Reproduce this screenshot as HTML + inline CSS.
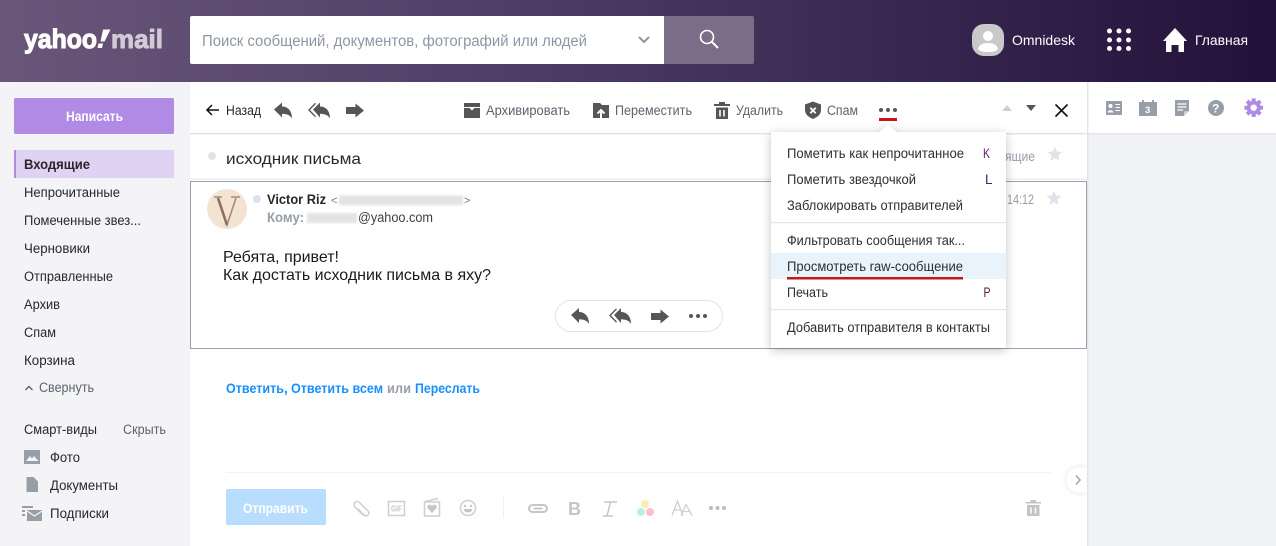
<!DOCTYPE html>
<html lang="ru"><head><meta charset="utf-8"><title>Yahoo Mail</title>
<style>
html,body{margin:0;padding:0;background:#fff;width:1276px;height:546px;overflow:hidden}
svg{display:block}
text{font-family:"Liberation Sans",sans-serif;font-size:13.5px;fill:#26282a}
.g{fill:#5b636e}
.m{font-size:13.5px;fill:#2c2f33}
.b{font-weight:bold}
.i{fill:#55565a}
.r{fill:#979ea8}
.f{fill:#c6c6c8}
.l{font-weight:bold;fill:#188fff}
</style></head><body>
<svg width="1276" height="546" viewBox="0 0 1276 546" xmlns="http://www.w3.org/2000/svg">
<defs>
<linearGradient id="hd" x1="0" y1="0" x2="1276" y2="0" gradientUnits="userSpaceOnUse">
<stop offset="0" stop-color="#6a5679"/><stop offset=".33" stop-color="#54426a"/><stop offset=".67" stop-color="#3b2a52"/><stop offset="1" stop-color="#23113a"/>
</linearGradient>
<filter id="bl" x="-20%" y="-50%" width="140%" height="200%"><feGaussianBlur stdDeviation="1"/></filter>
<filter id="sh" x="-10%" y="-10%" width="120%" height="125%"><feDropShadow dx="0" dy="2" stdDeviation="5" flood-color="#000" flood-opacity=".24"/></filter>
<filter id="sh2" x="-50%" y="-50%" width="200%" height="200%"><feDropShadow dx="0" dy="0" stdDeviation="3" flood-color="#000" flood-opacity=".12"/></filter>
<path id="rp" d="M0 7 8 0V4C13.500 4 18 8 18 16 15.800 12.500 13 11.400 8 11.400V15Z"/>
<g id="ra"><path d="M6.500 .8 0 7.500 6.500 14.200" fill="none" stroke="currentColor" stroke-width="1.400"/><path d="M4 7 11 0V4C16.500 4 21 8 21 16 18.800 12.500 16 11.400 11 11.400V15Z" fill="currentColor"/></g>
<path id="fw" d="M0 3.500H9.500V0L18 7 9.500 14V10.500H0Z"/>
</defs>

<!-- backgrounds -->
<rect width="1276" height="82" fill="url(#hd)"/>
<rect y="82" width="190" height="464" fill="#f4f4f7"/>
<rect x="1087" y="133" width="189" height="413" fill="#f1f2f5"/>
<rect x="190" y="133" width="1086" height="1.500" fill="#e2e4e8"/>
<rect x="1087" y="82" width="1.500" height="464" fill="#e2e4e8"/>

<!-- logo -->
<text x="24" y="48" textLength="73" lengthAdjust="spacingAndGlyphs" style="font-size:27px;font-weight:bold;fill:#fff;stroke:#fff;stroke-width:1.100">yahoo</text>
<path d="M103 29.500H110.500L104.500 41.500H100.500ZM98.500 43.500H103L102 48H97.500Z" fill="#fff"/>
<text x="111" y="48" textLength="52" lengthAdjust="spacingAndGlyphs" style="font-size:26px;font-weight:bold;fill:#d0ccd6;stroke:#d0ccd6;stroke-width:.9">mail</text>

<!-- search -->
<path d="M192 16H664V64H192a2 2 0 0 1-2-2V18a2 2 0 0 1 2-2Z" fill="#fff"/>
<path d="M664 16H752a2 2 0 0 1 2 2V62a2 2 0 0 1-2 2H664Z" fill="#7b6d88"/>
<text x="202" y="46" textLength="385" lengthAdjust="spacingAndGlyphs" style="font-size:15.500px;fill:#8d96a5">Поиск сообщений, документов, фотографий или людей</text>
<path d="M639 37 644 42 649 37" fill="none" stroke="#8d96a5" stroke-width="2"/>
<circle cx="707" cy="37" r="6.500" fill="none" stroke="#fff" stroke-width="1.600"/>
<path d="M711.500 41.500 718 48" stroke="#fff" stroke-width="2"/>

<!-- account -->
<rect x="972" y="24" width="32" height="32" rx="12" fill="#c9c9c9"/>
<circle cx="988" cy="36" r="5" fill="#fff"/>
<path d="M978 49c1-4.500 5-6 10-6s9 1.500 10 6c-2 2.500-5 3-10 3s-8-.5-10-3Z" fill="#fff"/>
<text x="1012" y="45" textLength="63" lengthAdjust="spacingAndGlyphs" style="font-size:14px;fill:#fff">Omnidesk</text>
<g fill="#fff">
<circle cx="1109.500" cy="31" r="2.500"/><circle cx="1119" cy="31" r="2.500"/><circle cx="1128.500" cy="31" r="2.500"/>
<circle cx="1109.500" cy="40" r="2.500"/><circle cx="1119" cy="40" r="2.500"/><circle cx="1128.500" cy="40" r="2.500"/>
<circle cx="1109.500" cy="48.500" r="2.500"/><circle cx="1119" cy="48.500" r="2.500"/><circle cx="1128.500" cy="48.500" r="2.500"/>
<path d="M1163 41 1175 28 1187 41H1184V52H1178.500V45H1171.500V52H1166V41Z"/>
</g>
<text x="1195" y="45" textLength="53" lengthAdjust="spacingAndGlyphs" style="font-size:14px;fill:#fff">Главная</text>

<!-- sidebar -->
<rect x="14" y="98" width="160" height="36" rx="2" fill="#b18ae6"/>
<text x="66" y="121" textLength="57" lengthAdjust="spacingAndGlyphs" class="b" style="fill:#fff">Написать</text>
<rect x="14" y="150" width="160" height="28" fill="#e0d2f3"/>
<rect x="14" y="150" width="2" height="28" fill="#b18ae6"/>
<text x="24" y="169" textLength="66" lengthAdjust="spacingAndGlyphs" class="b">Входящие</text>
<text x="24" y="197" textLength="96" lengthAdjust="spacingAndGlyphs">Непрочитанные</text>
<text x="24" y="225" textLength="117" lengthAdjust="spacingAndGlyphs">Помеченные звез...</text>
<text x="24" y="253" textLength="66" lengthAdjust="spacingAndGlyphs">Черновики</text>
<text x="24" y="281" textLength="89" lengthAdjust="spacingAndGlyphs">Отправленные</text>
<text x="24" y="309" textLength="36" lengthAdjust="spacingAndGlyphs">Архив</text>
<text x="24" y="337" textLength="32" lengthAdjust="spacingAndGlyphs">Спам</text>
<text x="24" y="365" textLength="51" lengthAdjust="spacingAndGlyphs">Корзина</text>
<path d="M25.500 390 29 386.500 32.500 390" fill="none" stroke="#5b636e" stroke-width="1.400"/>
<text x="39" y="392" textLength="55" lengthAdjust="spacingAndGlyphs" class="g">Свернуть</text>
<text x="24" y="434" textLength="73" lengthAdjust="spacingAndGlyphs">Смарт-виды</text>
<text x="123" y="434" textLength="43" lengthAdjust="spacingAndGlyphs" class="g">Скрыть</text>
<rect x="24" y="450" width="16" height="14" class="r"/>
<path d="M26 461 30 456 32 458.500 34 456 38.500 461Z" fill="#f4f4f7"/>
<path d="M26.500 477H33.500L38 481.500V492H26.500Z" class="r"/>
<path d="M22 506H33V508H22ZM22 510H25V512H22ZM22 514H25V516H22Z" class="r"/>
<path d="M27 510H42V521H27Z" class="r"/>
<path d="M27 511 34.500 516 42 511" fill="none" stroke="#f4f4f7" stroke-width="1.200"/>
<text x="50" y="462" textLength="30" lengthAdjust="spacingAndGlyphs">Фото</text>
<text x="50" y="490" textLength="68" lengthAdjust="spacingAndGlyphs">Документы</text>
<text x="50" y="518" textLength="59" lengthAdjust="spacingAndGlyphs">Подписки</text>

<!-- toolbar -->
<path d="M219 110H207M212 105 207 110 212 115" fill="none" stroke="#111" stroke-width="1.500"/>
<text x="226" y="115" textLength="35" lengthAdjust="spacingAndGlyphs">Назад</text>
<use href="#rp" x="274" y="102.500" class="i"/>
<use href="#ra" x="309" y="102.500" style="color:#55565a"/>
<use href="#fw" x="346" y="103.500" class="i"/>

<path d="M464 103H480V107H464ZM464 108H469.500L472 110.500 474.500 108H480V118H464Z" class="i"/>
<text x="486" y="115" textLength="84" lengthAdjust="spacingAndGlyphs" class="g">Архивировать</text>
<path d="M593 103H600L602 105H609V118H593Z" class="i"/>
<path d="M601 118V111.500M597.500 113.500 601 110 604.500 113.500" fill="none" stroke="#fff" stroke-width="2"/>
<text x="615" y="115" textLength="77" lengthAdjust="spacingAndGlyphs" class="g">Переместить</text>
<path d="M714 104H719V102H725V104H730V106H714ZM716 107.500H728V119H716Z" class="i"/>
<path d="M720 110V116.500M724 110V116.500" stroke="#fff" stroke-width="1.600"/>
<text x="736" y="115" textLength="47" lengthAdjust="spacingAndGlyphs" class="g">Удалить</text>
<path d="M813 101.500 821 104.500V110C821 114.500 817.500 117 813 119 808.500 117 805 114.500 805 110V104.500Z" class="i"/>
<path d="M810.300 107.800 815.700 113.200M815.700 107.800 810.300 113.200" stroke="#fff" stroke-width="1.800"/>
<text x="827" y="115" textLength="31" lengthAdjust="spacingAndGlyphs" class="g">Спам</text>
<circle cx="881" cy="110" r="2" class="i"/><circle cx="888" cy="110" r="2" class="i"/><circle cx="895" cy="110" r="2" class="i"/>
<rect x="879" y="118" width="18" height="3" fill="#c91616"/>
<path d="M1002 111 1007 105 1012 111Z" fill="#cfcfd1"/>
<path d="M1026 105H1036L1031 111Z" fill="#55565a"/>
<path d="M1055.500 104.500 1067.500 116.500M1067.500 104.500 1055.500 116.500" stroke="#111" stroke-width="1.600"/>

<!-- right rail -->
<rect x="1106" y="101" width="16" height="14" rx="1" class="r"/>
<circle cx="1110.500" cy="106" r="2" fill="#fff"/><path d="M1107.500 112.500c.3-3 5.700-3 6 0Z" fill="#fff"/>
<path d="M1115.500 104.500H1120M1115.500 107.500H1120M1115.500 110.500H1120" stroke="#fff" stroke-width="1"/>
<path d="M1139 102H1142V100H1144V102H1152V100H1154V102H1157V116H1139Z" class="r"/>
<text x="1145" y="113" style="font-size:9.500px;font-weight:bold;fill:#fff">3</text>
<path d="M1175 100H1189V111L1184 116H1175Z" class="r"/>
<path d="M1177.500 104H1186.500M1177.500 107H1186.500M1177.500 110H1183" stroke="#fff" stroke-width="1.200"/>
<path d="M1185 116V112H1189" fill="none" stroke="#fff" stroke-width="1"/>
<circle cx="1216" cy="108" r="8" class="r"/>
<text x="1212" y="112.500" style="font-size:12px;font-weight:bold;fill:#fff">?</text>
<circle cx="1253.700" cy="107.700" r="7" fill="#b18ae6"/>
<g stroke="#b18ae6" stroke-width="4"><path d="M1253.700 98.400V117M1244.400 107.700H1263M1247.100 101.100 1260.300 114.300M1260.300 101.100 1247.100 114.300"/></g>
<circle cx="1253.700" cy="107.700" r="3.200" fill="#fff"/>

<!-- subject -->
<circle cx="212" cy="156" r="4" fill="#e0e4ea"/>
<text x="226" y="164" textLength="135" lengthAdjust="spacingAndGlyphs" style="font-size:16px">исходник письма</text>
<text x="1005" y="161" textLength="30" lengthAdjust="spacingAndGlyphs" style="fill:#979ea8">ящие</text>
<path d="M1055 146.500 1057 151.500 1062.500 152 1058.300 155.500 1059.600 161 1055 158 1050.400 161 1051.700 155.500 1047.500 152 1053 151.500Z" fill="#e0e4ea"/>

<!-- message card -->
<rect x="190.500" y="181.500" width="896" height="167" fill="#fff" stroke="#9b9fb2"/>
<rect x="190" y="178.500" width="897" height="1.500" fill="#eceef1"/>
<circle cx="227" cy="209" r="20" fill="#f3e3d2"/>
<path d="M214 197H222M231 197H240M218 198 227 225 236 198" fill="none" stroke="#a98a78" stroke-width="1.600"/>
<path d="M218 198 227 225" stroke="#8f6f62" stroke-width="2.600"/>
<circle cx="257" cy="199" r="4" fill="#dde0ee"/>
<text x="267" y="204" textLength="59" lengthAdjust="spacingAndGlyphs" class="b">Victor Riz</text>
<text x="331" y="204" style="font-size:11px;fill:#6e7580">&lt;</text>
<rect x="339" y="195.500" width="124" height="9.500" fill="#e2e3e5" filter="url(#bl)"/>
<text x="464" y="204" style="font-size:11px;fill:#6e7580">&gt;</text>
<text x="267" y="222" textLength="37" lengthAdjust="spacingAndGlyphs" class="b" style="fill:#979ea8">Кому:</text>
<rect x="307" y="213" width="50" height="10" fill="#e2e3e5" filter="url(#bl)"/>
<text x="358" y="222" textLength="75" lengthAdjust="spacingAndGlyphs" style="fill:#3b3f45">@yahoo.com</text>
<text x="223" y="262" textLength="116" lengthAdjust="spacingAndGlyphs" style="font-size:16px;fill:#1a1a1a">Ребята, привет!</text>
<text x="223" y="280" textLength="268" lengthAdjust="spacingAndGlyphs" style="font-size:16px;fill:#1a1a1a">Как достать исходник письма в яху?</text>
<text x="1007" y="204" textLength="27" lengthAdjust="spacingAndGlyphs" style="font-size:14px;fill:#979ea8">14:12</text>
<path d="M1054 190.500 1056 195.500 1061.500 196 1057.300 199.500 1058.600 205 1054 202 1049.400 205 1050.700 199.500 1046.500 196 1052 195.500Z" fill="#e0e4ea"/>

<!-- pill -->
<rect x="555.500" y="300.500" width="167" height="31" rx="15.500" fill="#fff" stroke="#e0e4ea"/>
<use href="#rp" x="571" y="308" class="i"/>
<use href="#ra" x="610" y="308" style="color:#55565a"/>
<use href="#fw" x="651" y="309.500" class="i"/>
<circle cx="691" cy="316" r="2" class="i"/><circle cx="698" cy="316" r="2" class="i"/><circle cx="705" cy="316" r="2" class="i"/>

<!-- menu -->
<g filter="url(#sh)">
<path d="M773 132H880L888 124.500 896 132H1004a2 2 0 0 1 2 2V346a2 2 0 0 1-2 2H773a2 2 0 0 1-2-2V134a2 2 0 0 1 2-2Z" fill="#fff"/>
</g>
<rect x="771" y="253" width="235" height="26" fill="#e9f3fc"/>
<rect x="771" y="222" width="235" height="1.200" fill="#e2e4e8"/>
<rect x="771" y="309" width="235" height="1.200" fill="#e2e4e8"/>
<text x="787" y="158" textLength="177" lengthAdjust="spacingAndGlyphs" class="m">Пометить как непрочитанное</text>
<text x="983" y="158" textLength="7" lengthAdjust="spacingAndGlyphs" style="fill:#5a1a70">K</text>
<text x="787" y="184" textLength="129" lengthAdjust="spacingAndGlyphs" class="m">Пометить звездочкой</text>
<text x="985" y="184" style="fill:#3a2a70">L</text>
<text x="787" y="210" textLength="176" lengthAdjust="spacingAndGlyphs" class="m">Заблокировать отправителей</text>
<text x="787" y="245" textLength="178" lengthAdjust="spacingAndGlyphs" class="m">Фильтровать сообщения так...</text>
<text x="787" y="271" textLength="176" lengthAdjust="spacingAndGlyphs" class="m">Просмотреть raw-сообщение</text>
<rect x="787" y="277" width="176" height="2.500" fill="#c91616"/>
<text x="787" y="297" textLength="41" lengthAdjust="spacingAndGlyphs" class="m">Печать</text>
<text x="983.500" y="297" textLength="7" lengthAdjust="spacingAndGlyphs" style="fill:#5a1a30">P</text>
<text x="787" y="332" textLength="203" lengthAdjust="spacingAndGlyphs" class="m">Добавить отправителя в контакты</text>

<!-- reply links -->
<text x="226" y="393" textLength="58" lengthAdjust="spacingAndGlyphs" class="l">Ответить</text>
<text x="284" y="393" class="l">,</text>
<text x="291" y="393" textLength="92" lengthAdjust="spacingAndGlyphs" class="l">Ответить всем</text>
<text x="387" y="393" textLength="24" lengthAdjust="spacingAndGlyphs" class="b" style="fill:#979ea8">или</text>
<text x="415" y="393" textLength="65" lengthAdjust="spacingAndGlyphs" class="l">Переслать</text>

<!-- compose -->
<rect x="226" y="472" width="825" height="1" fill="#f3f3f5"/>
<rect x="226" y="489" width="100" height="36" rx="2" fill="#b8ddff"/>
<text x="243" y="513" textLength="65" lengthAdjust="spacingAndGlyphs" class="b" style="fill:#fff">Отправить</text>
<path d="M363.500 515.500 355 507C352 503.500 356.500 499.500 359.500 502.500L368 511C370.500 514 367 517.500 364 515L357.500 508.500" fill="none" stroke="#cfcfd1" stroke-width="1.500"/>
<rect x="388.500" y="501.500" width="16" height="14" fill="#fff" stroke="#cfcfd1" stroke-width="1.500"/>
<text x="391" y="511.500" textLength="11" lengthAdjust="spacingAndGlyphs" style="font-size:8.500px;font-weight:bold;fill:#c6c6c8">GIF</text>
<path d="M424.500 502H439.500V516H424.500ZM425 501.500 438 498.500" fill="#fff" stroke="#cfcfd1" stroke-width="1.500"/>
<path d="M432 513 427.500 508C426.500 504.500 430.500 503.500 432 506 433.500 503.500 437.500 504.500 436.500 508Z" class="f"/>
<circle cx="468" cy="508" r="7.500" fill="none" stroke="#cfcfd1" stroke-width="1.500"/>
<circle cx="465" cy="506" r="1.200" class="f"/><circle cx="471" cy="506" r="1.200" class="f"/>
<path d="M463.500 509H472.500C472 513.500 464 513.500 463.500 509Z" class="f"/>
<rect x="503" y="495" width="1" height="23" fill="#f0f0f3"/>
<rect x="529" y="505" width="18" height="7" rx="3.500" fill="none" stroke="#c6c6c8" stroke-width="2"/>
<path d="M533 508.500H543" stroke="#fff" stroke-width="4"/><path d="M533.500 508.500H542.500" stroke="#c6c6c8" stroke-width="1.800"/>
<text x="568" y="515" style="font-size:18px;font-weight:bold;fill:#c6c6c8">B</text>
<path d="M604 502H617M603 516H613M610.500 502 607 516" fill="none" stroke="#c6c6c8" stroke-width="1.500"/>
<circle cx="645" cy="504" r="4" fill="#fbeeb5"/><circle cx="641" cy="512" r="4" fill="#b8efe2"/><circle cx="650" cy="512" r="4" fill="#fbc2c6"/>
<path d="M672 515.500 677.500 501 683 515.500M674 510H681M681 515.500 686 504.500 692 515.500M683 511.500H690" fill="none" stroke="#cfcfd1" stroke-width="1.300"/>
<circle cx="711" cy="508" r="2" fill="#bdbdbf"/><circle cx="717.500" cy="508" r="2" fill="#bdbdbf"/><circle cx="724" cy="508" r="2" fill="#bdbdbf"/>
<path d="M1025.500 502H1030.500V500H1036V502H1041V503.500H1025.500ZM1027 505H1039.500V516H1027Z" fill="#c4c4c6"/>
<path d="M1031 507.500V513.500M1035.500 507.500V513.500" stroke="#fff" stroke-width="1.500"/>

<!-- collapse handle -->
<path d="M1087 467.500H1079a12.500 12.500 0 0 0 0 25H1087Z" fill="#fff" filter="url(#sh2)"/>
<rect x="1087" y="460" width="1.500" height="40" fill="#e2e4e8"/>
<rect x="1088.500" y="455" width="12" height="50" fill="#f1f2f5"/>
<path d="M1076 475.500 1080 480 1076 484.500" fill="none" stroke="#a6a9b0" stroke-width="1.600"/>
</svg>
</body></html>
